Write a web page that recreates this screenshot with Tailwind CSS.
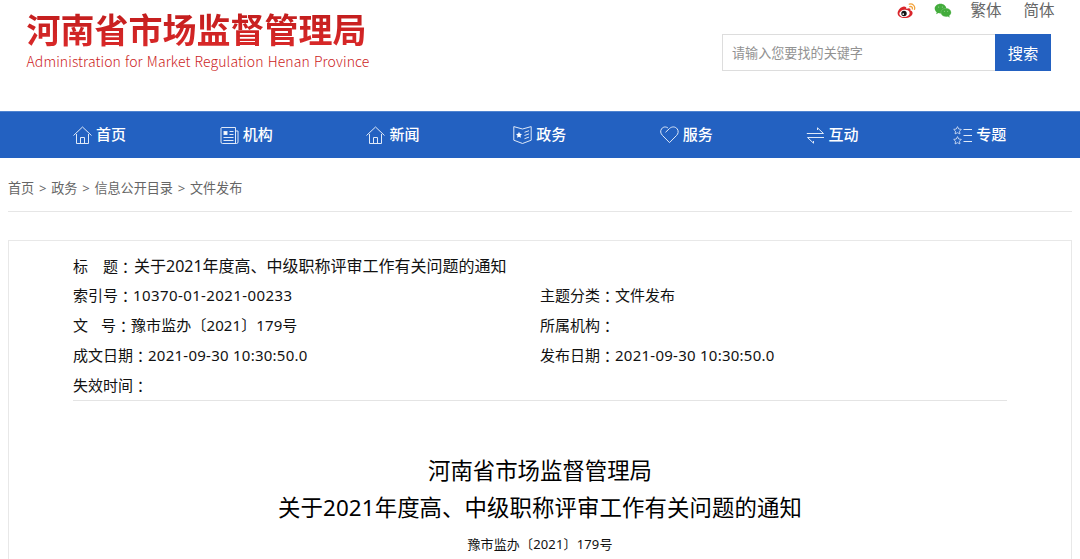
<!DOCTYPE html>
<html lang="zh-CN">
<head>
<meta charset="utf-8">
<title>河南省市场监督管理局</title>
<script src="https://cdn.jsdelivr.net/npm/@tailwindcss/browser@4"></script>
</head>
<body class="h-[559px] overflow-hidden bg-white font-['Noto_Sans','Noto_Sans_CJK_SC',sans-serif] text-[#111]">
<header class="flex h-[111px] justify-between pl-[26.5px] pr-[29px]">
  <div class="pt-[9px]">
    <h1 class="whitespace-nowrap bg-linear-to-b from-[#c01c1c] to-[#dc2a2a] bg-clip-text text-[34px] leading-[42px] font-bold text-transparent">河南省市场监督管理局</h1>
    <p class="whitespace-nowrap font-['Noto_Sans_CJK_SC'] text-[14px] leading-[20px] font-light tracking-[0.1px] [word-spacing:0.9px] text-[#cc1c1c]">Administration for Market Regulation Henan Province</p>
  </div>
  <div class="w-[329px]">
    <div class="-mr-[3.5px] flex h-[34px] items-start justify-end text-[15.5px] leading-[20px] text-[#666]">
      <svg class="mt-[3px] mr-[18px] h-[16px] w-[19px]" viewBox="0 0 19 16">
        <path d="M7 3.6C4 3.6.6 7.400 .6 10.300C.6 13.200 3.900 15.100 7.700 15.100C12.300 15.100 15.600 12.600 15.600 10C15.600 8.500 14.500 7.700 13.400 7.400C13.900 5.700 12.700 4.700 9.400 5.900C9.600 4.500 8.900 3.600 7 3.600Z" fill="#d9252b"/>
        <ellipse cx="7.500" cy="10.400" rx="5.200" ry="3.600" fill="#fff" transform="rotate(-8 7.500 10.400)"/>
        <circle cx="7" cy="10.500" r="2.700" fill="#151515"/><circle cx="6.200" cy="11.100" r=".9" fill="#fff"/>
        <path d="M12.300 1.200C15.500 .2 18.500 2.900 17.500 6.300M12.800 3.600C14.500 3.200 15.800 4.400 15.300 6" fill="none" stroke="#f2a23a" stroke-width="1.300" stroke-linecap="round"/>
      </svg>
      <svg class="mt-[3px] mr-[18px] h-[15px] w-[18px]" viewBox="0 0 18 15">
        <path d="M6.500 .8C3.200 .8.700 3 .7 5.600C.7 7.100 1.500 8.400 2.700 9.300L2.200 11.200L4.400 10.100C5.100 10.300 5.800 10.400 6.500 10.400C9.800 10.400 12.300 8.200 12.300 5.600S9.800 .8 6.500 .8Z" fill="#43ac3c"/>
        <path d="M12 5.300C9.100 5.300 6.900 7.200 6.900 9.500S9.100 13.700 12 13.700C12.600 13.700 13.200 13.600 13.800 13.400L15.600 14.400L15.200 12.700C16.400 11.900 17.100 10.800 17.100 9.500C17.100 7.200 14.900 5.300 12 5.300Z" fill="#43ac3c" stroke="#a5d8a0" stroke-width=".3"/>
        <g fill="#a5d8a0"><circle cx="4.600" cy="4" r=".6"/><circle cx="8.400" cy="4" r=".6"/><circle cx="10.400" cy="8.300" r=".5"/><circle cx="13.700" cy="8.300" r=".5"/></g>
      </svg>
      <a class="mr-[22px]">繁体</a><a>简体</a>
    </div>
    <div class="flex h-[37px]">
      <div class="flex-1 border border-r-0 border-[#ddd] pl-[9px] text-[13.1px] leading-[36px] text-[#929292]">请输入您要找的关键字</div>
      <div class="w-[56px] bg-[#2361c1] text-center text-[15.3px] leading-[38px] text-white">搜索</div>
    </div>
  </div>
</header>
<nav class="h-[47px] border-t border-[#5084d0] bg-[#2361c1] pl-[73px] text-[15px] leading-[44px] font-medium text-white">
  <ul class="grid w-[1027px] grid-cols-7 [&_li]:flex [&_li]:items-center [&_li]:gap-[4px] [&_svg]:mt-[3px] [&_svg]:h-[19px] [&_svg]:w-[19px] [&_svg]:fill-none [&_svg]:stroke-[#dfe9f8]">
    <li><svg viewBox="0 0 19 19"><path d="M.5 9.500L9.500 1L18.500 9.500M3.500 8V17.500H15.500V8M7.500 17.500V11.500H11.500V17.500"/></svg>首页</li>
    <li><svg viewBox="0 0 19 19"><path d="M1.500 1.500H15.500V17.500H2.500Q1 17.500 1 16V2ZM15.500 5H18V16Q18 17.500 16.500 17.500H15M9.500 5.500H13.500M9.500 8.500H13.500M3.500 11.500H13.500M3.500 14.500H13.500"/><rect x="4" y="5.500" width="3" height="3" fill="#fff"/></svg>机构</li>
    <li><svg viewBox="0 0 19 19"><path d="M.5 9.500L9.500 1L18.500 9.500M3.500 8V17.500H15.500V8M7.500 17.500V11.500H11.500V17.500"/></svg>新闻</li>
    <li><svg viewBox="0 0 19 19"><path d="M9.500 3L.8.600V14.200L9.500 17.500L18.200 14.200V.6L9.500 3M11.500 6.300L16 4.700M11.500 9.500L16 7.900M11.500 12.700L16 11.100"/><path d="M6 5.700L6.900 7.800L9 8.100L7.500 9.600L7.900 11.700L6 10.700L4.100 11.700L4.500 9.600L3 8.100L5.100 7.800Z" fill="#fff" stroke="none"/></svg>政务</li>
    <li><svg viewBox="0 0 19 19"><path d="M5.500 6.300L9.500 2.500C12 .2 15.500 .5 17.300 3C18.800 5.300 18.200 7.800 16.500 9.500L9.500 16.600L2.500 9.500C.3 7.200 .2 4.800 1.600 2.800C3.300 .5 6 .5 8 2"/></svg>服务</li>
    <li class="-ml-px"><svg viewBox="0 0 19 19"><path d="M.8 7.500H17.500L11.500 1.800V4M18 11.500H1.500L7.500 17.200V15"/></svg>互动</li>
    <li><svg viewBox="0 0 19 19"><path d="M10.500 3.500H19M10.500 9.500H19M10.500 15.500H19"/><path stroke-width=".8" d="M4.500 .6L5.700 3L8.300 3.400L6.500 5.200L6.900 7.900L4.500 6.700L2.100 7.900L2.500 5.200L.7 3.400L3.300 3ZM4.500 10.600L5.700 13L8.300 13.400L6.500 15.200L6.900 17.900L4.500 16.700L2.100 17.900L2.500 15.200L.7 13.400L3.300 13Z"/></svg>专题</li>
  </ul>
</nav>
<main class="px-[8px]">
  <div class="flex h-[54px] border-b border-[#e6e6e6] text-[13.1px] leading-[61px] text-[#666]">
    <span>首页</span><span class="w-[17px] text-center">&gt;</span><span>政务</span><span class="w-[17px] text-center">&gt;</span><span>信息公开目录</span><span class="w-[17px] text-center">&gt;</span><span>文件发布</span>
  </div>
  <article class="mt-[28px] h-[330px] border border-[#e8e8e8] px-[64px] pt-[10px]">
    <section class="grid h-[150px] grid-cols-2 content-start border-b border-[#e4e4e4] text-[15px] leading-[30px] whitespace-nowrap [&_i]:align-[-1px] [&_i]:font-['Noto_Sans_CJK_JP'] [&_i]:leading-none [&_i]:not-italic">
      <div class="col-span-2 flex"><span class="w-[30px]">标</span><span class="w-[31px]">题<i lang="ja">：</i></span><span class="text-[16px]">关于2021年度高、中级职称评审工作有关问题的通知</span></div>
      <div class="leading-[29px]">索引号<i lang="ja">：</i><span class="tracking-[0.4px]">10370-01-2021-00233</span></div><div class="leading-[29px]">主题分类<i lang="ja">：</i>文件发布</div>
      <div class="flex"><span class="w-[28px]">文</span><span class="w-[30px]">号<i lang="ja">：</i></span><span class="tracking-[0.1px]">豫市监办〔2021〕179号</span></div><div>所属机构<i lang="ja">：</i></div>
      <div>成文日期<i lang="ja">：</i><span class="tracking-[0.25px]">2021-09-30 10:30:50.0</span></div><div>发布日期<i lang="ja">：</i><span class="tracking-[0.25px]">2021-09-30 10:30:50.0</span></div>
      <div>失效时间<i lang="ja">：</i></div>
    </section>
    <h2 class="mt-[51px] text-center text-[22.4px] leading-[37px] whitespace-nowrap text-black">河南省市场监督管理局<br><span class="tracking-[0.1px]">关于2021年度高、中级职称评审工作有关问题的通知</span></h2>
    <p class="mt-[4px] text-center text-[13px] leading-[28px] tracking-[0.15px]">豫市监办〔2021〕179号</p>
  </article>
</main>
</body>
</html>
